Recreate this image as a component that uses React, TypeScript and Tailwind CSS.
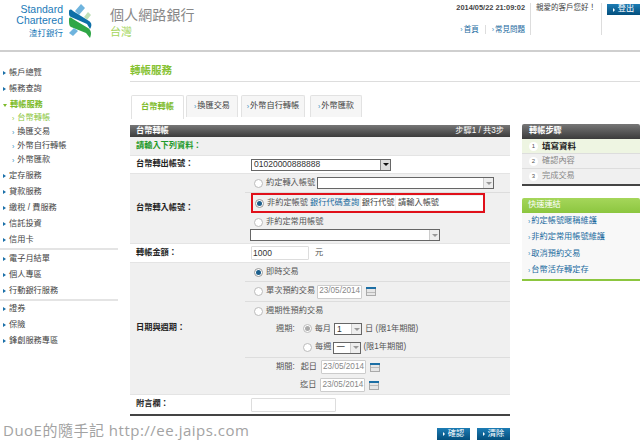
import React from "react";

const font = "font-['Liberation_Sans','Noto_Sans_CJK_TC',sans-serif]";

function Logo() {
  return (
    <svg width="24" height="34" viewBox="0 0 24 34" className="block">
      <path d="M7 7 L13 0 L17 4 L11 11 Z" fill="#6fb4de" />
      <path d="M16 13 L20 8 L23 11 L19 16 Z" fill="#bfe0b8" />
      <path d="M1 8 C1 5 3 5 5 7 L21 17 C24 19 24 22 22 25 L19 20 L3 13 C1 12 1 11 1 8 Z" fill="#0d6fa8" />
      <path d="M1 16 C1 13 2 13 5 15 L20 24 C23 26 24 29 22 34 L18 29 L3 23 C1 22 1 19 1 16 Z" fill="#2fa646" />
      <path d="M1 29 L6 24 L10 27 L5 32 Z" fill="#6fb4de" />
    </svg>
  );
}

function Chev({ color = "#3a8fc0" }: { color?: string }) {
  return <span className="mr-[1px] text-[7px] leading-none" style={{ color }}>›</span>;
}

function NavItem({ label, green }: { label: string; green?: boolean }) {
  return (
    <div className={`flex h-[16px] items-center pl-[3px] text-[8.2px] ${green ? "font-bold text-[#7dbb2a]" : "text-[#444]"}`}>
      {green ? (
        <span className="mr-[3px] inline-block h-0 w-0 border-x-[2px] border-t-[3px] border-x-transparent border-t-[#7dbb2a]" />
      ) : (
        <span className="mr-[3px] inline-block h-0 w-0 border-y-[2px] border-l-[3px] border-y-transparent border-l-[#1a6fa8]" />
      )}
      {label}
    </div>
  );
}

function SubItem({ label, active }: { label: string; active?: boolean }) {
  return (
    <div className={`flex h-[14px] items-center pl-[12px] text-[8.2px] ${active ? "text-[#8cc63f]" : "text-[#444]"}`}>
      <span className={`mr-[3px] text-[7px] leading-none ${active ? "text-[#8cc63f]" : "text-[#3a8fc0]"}`}>›</span>
      {label}
    </div>
  );
}

function Radio({ checked, dim }: { checked?: boolean; dim?: boolean }) {
  return (
    <span className={`mr-[3px] inline-flex h-[9px] w-[9px] shrink-0 items-center justify-center rounded-full border bg-white ${dim ? "border-[#bbb]" : "border-[#999]"}`}>
      {checked && <span className={`h-[5px] w-[5px] rounded-full ${dim ? "bg-[#aaa]" : "bg-[#1c5f8c]"}`} />}
    </span>
  );
}

function Arrow({ dim }: { dim?: boolean }) {
  return (
    <span className={`flex h-full w-[10px] items-center justify-center border-l ${dim ? "border-[#ccc] bg-[#eee]" : "border-[#888] bg-[#ddd]"}`}>
      <span className={`h-0 w-0 border-x-[3px] border-t-[3px] border-x-transparent ${dim ? "border-t-[#999]" : "border-t-[#111]"}`} />
    </span>
  );
}

function Select({ w, text, dim }: { w: string; text?: string; dim?: boolean }) {
  return (
    <div className={`flex h-[12px] items-center justify-between border border-[#666] bg-white ${w}`}>
      <span className="pl-[2px] text-[8.5px] leading-none text-[#333]">{text}</span>
      <Arrow dim={dim} />
    </div>
  );
}

function Calendar() {
  return (
    <span className="ml-[4px] flex h-[9px] w-[10px] flex-col">
      <span className="h-[2px] bg-[#1c6ea4]" />
      <span className="flex flex-1 flex-col justify-around border-x border-b border-[#aaa] bg-[#e6e6e6]">
        <span className="h-px bg-[#bbb]" />
      </span>
    </span>
  );
}

function DateBox() {
  return (
    <span className="flex h-[14px] w-[45px] items-center justify-center rounded-[1px] border border-[#ccc] bg-white text-[8.2px] text-[#888]">23/05/2014</span>
  );
}

function BlueButton({ label }: { label: string }) {
  return (
    <div className="flex h-[12px] w-[33px] items-center justify-center bg-gradient-to-b from-[#1c7cb4] to-[#044f7d] text-[8.2px] text-white">
      <span className="mr-[3px] inline-block h-0 w-0 border-y-[2px] border-l-[2px] border-y-transparent border-l-white" />
      {label}
    </div>
  );
}

function Tab({ label, w, ml, active }: { label: string; w: string; ml: string; active?: boolean }) {
  return (
    <div className={`flex items-center justify-center rounded-t-[2px] border border-b-0 border-[#e2e2e2] text-[8.2px] ${w} ${ml} ${active ? "h-[24px] bg-white font-bold text-[#7dbb2a]" : "h-[22px] bg-[#f6f6f6] text-[#444]"}`}>
      {!active && <span className="mr-[1px] text-[7px] leading-none text-[#3a8fc0]">›</span>}
      {label}
    </div>
  );
}

function Label({ children }: { children: React.ReactNode }) {
  return <div className="flex w-[115px] shrink-0 items-center pl-[6px] text-[8.2px] font-bold text-[#222]">{children}</div>;
}

function SubRow({ h, children, border }: { h: string; children: React.ReactNode; border?: boolean }) {
  return <div className={`flex items-center pl-[9px] text-[8.2px] text-[#555] ${h} ${border ? "border-b border-[#ddd]" : ""}`}>{children}</div>;
}

function QuickLink({ label }: { label: string }) {
  return (
    <div className="flex h-[16.3px] items-center pl-[6px] text-[8.2px] text-[#1a6a9e]">
      <span className="mr-[1px] text-[7px] leading-none text-[#3a8fc0]">›</span>
      {label}
    </div>
  );
}

export default function App() {
  return (
    <div className={`relative h-[443px] w-[640px] overflow-hidden bg-white ${font}`}>
      {/* header */}
      <header className="flex h-[52px] border-b-2 border-[#cfcfcf]">
        <div className="flex w-[110px] shrink-0 items-start pl-[14px] pt-[4px]">
          <div className="w-[49px] text-right">
            <div className="text-[10.5px] leading-[11px] text-[#1a7ab8]">Standard</div>
            <div className="text-[10.5px] leading-[11px] text-[#1a7ab8]">Chartered</div>
            <div className="mt-[2px] text-[8.5px] leading-[10px] text-[#1a7ab8]">渣打銀行</div>
          </div>
          <div className="ml-[5px]"><Logo /></div>
        </div>
        <div className="pt-[6px]">
          <div className="text-[14px] leading-[18px] tracking-[0.1px] text-[#888]">個人網路銀行</div>
          <div className="mt-[2px] text-[11px] leading-[13px] text-[#a5d65a]">台灣</div>
        </div>
        <div className="ml-auto flex pt-[3px]">
          <div className="flex h-[32px] w-[78px] flex-col border-r border-[#ddd] text-[7.5px]">
            <div className="flex h-[10px] items-center justify-end whitespace-nowrap pr-[5px] text-[7.4px] font-bold text-[#444]">2014/05/22 21:09:02</div>
            <div className="mt-[12px] flex h-[9px] items-center justify-end whitespace-nowrap pr-[5px] text-[#1a6a9e]">
              <Chev />首頁
              <span className="mx-[6px] h-[9px] w-px bg-[#ddd]" />
              <Chev />常見問題
            </div>
          </div>
          <div className="h-[32px] w-[71px] whitespace-nowrap border-r border-[#ddd] pl-[5px] text-[7.5px] leading-[10px] text-[#444]">親愛的客戶您好！</div>
          <div className="ml-[5px] mt-[1px]">
            <div className="flex h-[11px] w-[33px] items-center justify-center bg-gradient-to-b from-[#1c7cb4] to-[#044f7d] text-[8.2px] text-white">
              <span className="mr-[3px] inline-block h-0 w-0 border-y-[2px] border-l-[2px] border-y-transparent border-l-white" />
              登出
            </div>
          </div>
        </div>
      </header>

      <div className="flex">
        {/* sidebar */}
        <nav className="w-[130px] shrink-0 pr-[12px] pt-[13px]">
          <NavItem label="帳戶總覽" />
          <NavItem label="帳務查詢" />
          <NavItem label="轉帳服務" green />
          <div className="-mt-[2px] mb-[1px]">
            <SubItem label="台幣轉帳" active />
            <SubItem label="換匯交易" />
            <SubItem label="外幣自行轉帳" />
            <SubItem label="外幣匯款" />
          </div>
          <NavItem label="定存服務" />
          <NavItem label="貸款服務" />
          <NavItem label="繳稅 / 費服務" />
          <NavItem label="信託投資" />
          <NavItem label="信用卡" />
          <div className="mb-[1px] h-[2px] bg-[#e4e4e4]" />
          <NavItem label="電子月結單" />
          <NavItem label="個人專區" />
          <NavItem label="行動銀行服務" />
          <div className="h-[2px] bg-[#e4e4e4]" />
          <NavItem label="證券" />
          <NavItem label="保險" />
          <NavItem label="鋒創服務專區" />
        </nav>

        {/* main */}
        <main className="flex-1">
          <div className="flex h-[30px] items-end border-b border-[#ddd] pb-[4px] text-[10.5px] font-bold leading-[14px] text-[#86c232]">轉帳服務</div>
          <div className="mt-[13px] flex items-start pl-[1px]">
            <Tab label="台幣轉帳" w="w-[53px]" ml="" active />
            <Tab label="換匯交易" w="w-[52px]" ml="ml-[2px]" />
            <Tab label="外幣自行轉帳" w="w-[64px]" ml="ml-[3px]" />
            <Tab label="外幣匯款" w="w-[52px]" ml="ml-[5px]" />
          </div>

          <div className="flex pt-[6px]">
            {/* form */}
            <div className="w-[380px] shrink-0">
              <div className="flex h-[12px] items-center justify-between bg-gradient-to-b from-[#777] to-[#3c3c3c] px-[6px] text-[8.2px] text-white">
                <span className="font-bold">台幣轉帳</span>
                <span>步驟1 / 共3步</span>
              </div>
              <div className="flex h-[18px] items-center bg-[#f0f0f0] pl-[6px] text-[8.2px] font-bold text-[#1f9a2a]">請輸入下列資料：</div>
              <div className="flex h-[18px] border-t border-[#e4e4e4] bg-white">
                <Label>台幣轉出帳號：</Label>
                <div className="flex items-center pl-[6px]"><Select w="w-[140px]" text="01020000888888" /></div>
              </div>
              <div className="flex h-[71px] border-y border-[#e4e4e4] bg-[#f0f0f0]">
                <Label>台幣轉入帳號：</Label>
                <div className="min-w-0 flex-1">
                  <SubRow h="h-[19px]" border>
                    <Radio dim />約定轉入帳號<span className="ml-[2px]"><Select w="w-[177px]" dim /></span>
                  </SubRow>
                  <div className="ml-[6px] flex h-[20px] w-[234px] items-center border-2 border-[#e0101a] pl-[2px] text-[8.2px] text-[#555]">
                    <Radio checked />非約定帳號
                    <span className="ml-[2px] text-[#1a6a9e]">銀行代碼查詢</span>
                    <span className="ml-[2px] flex h-[14px] w-[34px] items-center justify-center bg-white text-[#444]">銀行代號</span>
                    <span className="ml-[1px] flex h-[14px] flex-1 items-center bg-white pl-[2px] text-[#444]">請輸入帳號</span>
                  </div>
                  <div className="flex h-[16px] items-center pl-[9px] pt-[2px] text-[8.2px] text-[#555]">
                    <Radio dim />非約定常用帳號
                  </div>
                  <div className="pl-[5px]"><Select w="w-[190px]" dim /></div>
                </div>
              </div>
              <div className="flex h-[18px] bg-white">
                <Label>轉帳金額：</Label>
                <div className="flex items-center pl-[6px] text-[8.2px] text-[#555]">
                  <span className="mr-[6px] flex h-[14px] w-[58px] items-center rounded-[1px] border border-[#ddd] pl-[1px] text-[8.5px] text-[#333]">1000</span>元
                </div>
              </div>
              <div className="flex h-[133px] border-y border-[#e4e4e4] bg-[#f0f0f0]">
                <Label>日期與週期：</Label>
                <div className="min-w-0 flex-1">
                  <SubRow h="h-[19px]" border><Radio checked />即時交易</SubRow>
                  <SubRow h="h-[20px]" border><Radio dim />單次預約交易<span className="ml-[2px]"><DateBox /></span><Calendar /></SubRow>
                  <SubRow h="h-[18px]"><Radio dim />週期性預約交易</SubRow>
                  <div className="flex h-[18px] items-center pl-[31px] text-[8.2px] text-[#555]">
                    週期:
                    <span className="ml-[8px]"><Radio checked dim /></span>每月
                    <span className="mx-[3px]"><Select w="w-[28px]" text="1" dim /></span>日 (限1年期間)
                  </div>
                  <div className="flex h-[20px] items-center border-b border-[#ddd] pl-[58px] text-[8.2px] text-[#555]">
                    <Radio dim />每週
                    <span className="mx-[2px]"><Select w="w-[28px]" text="一" dim /></span>(限1年期間)
                  </div>
                  <div className="flex h-[18px] items-center pl-[31px] text-[8.2px] text-[#555]">
                    期間:<span className="ml-[6px] mr-[4px]">起日</span><DateBox /><Calendar />
                  </div>
                  <div className="flex h-[18px] items-center pl-[55px] text-[8.2px] text-[#555]">
                    <span className="mr-[4px]">迄日</span><DateBox /><Calendar />
                  </div>
                </div>
              </div>
              <div className="flex h-[21px] border-b-2 border-[#444] bg-white">
                <Label>附言欄：</Label>
                <div className="flex items-center pl-[6px]"><span className="h-[14px] w-[85px] rounded-[1px] border border-[#ddd]" /></div>
              </div>
              <div className="mt-[12px] flex justify-end gap-[7px]">
                <BlueButton label="確認" />
                <BlueButton label="清除" />
              </div>
            </div>

            {/* side panels */}
            <aside className="ml-[12px] w-[118px] shrink-0 -mt-[1px]">
              <div className="flex h-[15px] items-center rounded-t-[2px] bg-gradient-to-b from-[#777] to-[#3c3c3c] pl-[7px] text-[8.2px] font-bold text-white">轉帳步驟</div>
              <div className="flex h-[15px] items-center border-b border-[#ddd] bg-[#eef5e2] pl-[7px] text-[8.5px] font-bold text-[#222]">
                <span className="mr-[4px] flex h-[9px] w-[9px] items-center justify-center rounded-full bg-white text-[6px] font-normal text-[#555]">1</span>填寫資料
              </div>
              <div className="flex h-[15px] items-center border-b border-[#ddd] bg-[#f0f0f0] pl-[7px] text-[8.2px] text-[#888]">
                <span className="mr-[4px] flex h-[9px] w-[9px] items-center justify-center rounded-full bg-white text-[6px] text-[#555]">2</span>確認內容
              </div>
              <div className="flex h-[15px] items-center bg-[#f0f0f0] pl-[7px] text-[8.2px] text-[#888]">
                <span className="mr-[4px] flex h-[9px] w-[9px] items-center justify-center rounded-full bg-white text-[6px] text-[#555]">3</span>完成交易
              </div>
              <div className="h-[2px] bg-[#444]" />

              <div className="mt-[12px] flex h-[15px] items-center rounded-t-[2px] bg-gradient-to-b from-[#a5d65a] to-[#8cc63f] pl-[6px] text-[8.2px] text-white">快速連結</div>
              <div className="bg-[#f8f8f8] pb-[1px]">
                <QuickLink label="約定帳號暱稱維護" />
                <QuickLink label="非約定常用帳號維護" />
                <QuickLink label="取消預約交易" />
                <QuickLink label="台幣活存轉定存" />
              </div>
              <div className="h-[2px] bg-[#8cc63f]" />
            </aside>
          </div>
        </main>
      </div>

      {/* watermark */}
      <div className="absolute bottom-[3px] left-[3px] font-['Open_Sans','Noto_Sans_CJK_TC',sans-serif] text-[15px] leading-[20px] tracking-[0.5px] text-[#a3a3a3]">
        DuoE的隨手記 http://ee.jaips.com
      </div>
    </div>
  );
}
